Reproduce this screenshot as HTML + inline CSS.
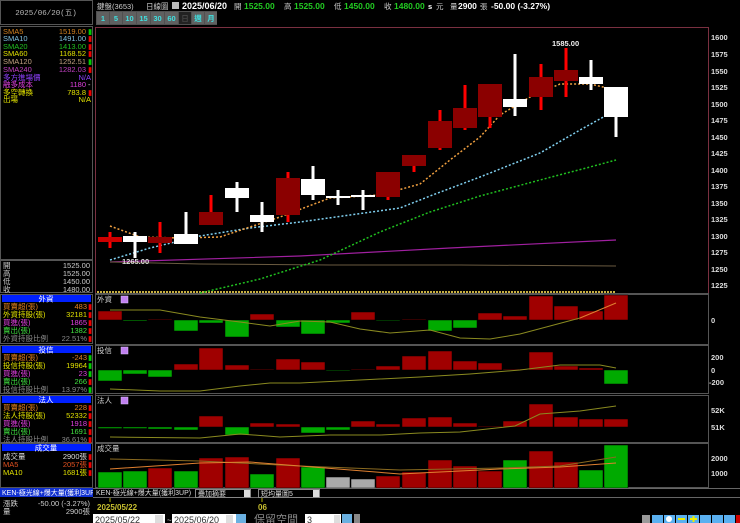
<!DOCTYPE html>
<html><head><meta charset="utf-8"><style>
html,body{margin:0;padding:0;background:#000;width:740px;height:523px;overflow:hidden}
svg{display:block}
text{font-family:"Liberation Sans","Noto Sans CJK TC",sans-serif;font-size:7.5px}
.m{font-family:"Liberation Mono","Noto Sans CJK TC",monospace}
</style></head><body>
<svg width="740" height="523" viewBox="0 0 740 523" xmlns="http://www.w3.org/2000/svg">
<rect width="740" height="523" fill="#000"/>
<!-- left panel borders -->
<rect x="0.5" y="0.5" width="92" height="24" fill="none" stroke="#555"/>
<text x="46" y="15" fill="#bbb" text-anchor="middle" class="m">2025/06/20(五)</text>
<rect x="0.5" y="26.5" width="92" height="233" fill="none" stroke="#555"/>
<g class="m">
<text x="3" y="34" fill="#d08020">SMA5</text><text x="86" y="34" fill="#d08020" text-anchor="end">1519.00</text><text x="88" y="34" fill="#0c0">▮</text>
<text x="3" y="41" fill="#80c0e0">SMA10</text><text x="86" y="41" fill="#80c0e0" text-anchor="end">1491.00</text><text x="88" y="41" fill="#e00">▮</text>
<text x="3" y="49" fill="#20c020">SMA20</text><text x="86" y="49" fill="#20c020" text-anchor="end">1413.00</text><text x="88" y="49" fill="#e00">▮</text>
<text x="3" y="56" fill="#e0e000">SMA60</text><text x="86" y="56" fill="#e0e000" text-anchor="end">1168.52</text><text x="88" y="56" fill="#e00">▮</text>
<text x="3" y="64" fill="#c0a080">SMA120</text><text x="86" y="64" fill="#c0a080" text-anchor="end">1252.51</text><text x="88" y="64" fill="#0c0">▮</text>
<text x="3" y="72" fill="#c040c0">SMA240</text><text x="86" y="72" fill="#c040c0" text-anchor="end">1282.03</text><text x="88" y="72" fill="#e00">▮</text>
<text x="3" y="80" fill="#9040ff">多方進場價</text><text x="91" y="80" fill="#9040ff" text-anchor="end">N/A</text>
<text x="3" y="87" fill="#e040e0">融多成本</text><text x="86" y="87" fill="#e040e0" text-anchor="end">1180</text><text x="88" y="87" fill="#ddd">-</text>
<text x="3" y="95" fill="#e0e000">多空轉換</text><text x="86" y="95" fill="#e0e000" text-anchor="end">783.8</text><text x="88" y="95" fill="#e00">▮</text>
<text x="3" y="102" fill="#e0e000">出場</text><text x="91" y="102" fill="#e0e000" text-anchor="end">N/A</text>
</g>
<rect x="0.5" y="260.5" width="92" height="32" fill="none" stroke="#555"/>
<g class="m" fill="#ccc">
<text x="3" y="268">開</text><text x="90" y="268" text-anchor="end">1525.00</text>
<text x="3" y="276">高</text><text x="90" y="276" text-anchor="end">1525.00</text>
<text x="3" y="284">低</text><text x="90" y="284" text-anchor="end">1450.00</text>
<text x="3" y="292">收</text><text x="90" y="292" text-anchor="end">1480.00</text>
</g>
<!-- 外資 -->
<rect x="0.5" y="294.5" width="92" height="49" fill="none" stroke="#555"/>
<rect x="2" y="295" width="89" height="7" fill="#0020ff"/><text x="46" y="301.5" fill="#fff" text-anchor="middle">外資</text>
<g class="m">
<text x="3" y="309" fill="#e08020">買賣超(張)</text><text x="87" y="309" fill="#e08020" text-anchor="end">483</text><text x="88" y="309" fill="#e00">▮</text>
<text x="3" y="317" fill="#e0e000">外資持股(張)</text><text x="87" y="317" fill="#e0e000" text-anchor="end">32181</text><text x="88" y="317" fill="#e00">▮</text>
<text x="3" y="325" fill="#e040e0">買進(張)</text><text x="87" y="325" fill="#e040e0" text-anchor="end">1865</text><text x="88" y="325" fill="#e00">▮</text>
<text x="3" y="333" fill="#40e040">賣出(張)</text><text x="87" y="333" fill="#40e040" text-anchor="end">1382</text><text x="88" y="333" fill="#e00">▮</text>
<text x="3" y="341" fill="#888">外資持股比例</text><text x="87" y="341" fill="#888" text-anchor="end">22.51%</text><text x="88" y="341" fill="#e00">▮</text>
</g>
<!-- 投信 -->
<rect x="0.5" y="345.5" width="92" height="48" fill="none" stroke="#555"/>
<rect x="2" y="346" width="89" height="7" fill="#0020ff"/><text x="46" y="352.5" fill="#fff" text-anchor="middle">投信</text>
<g class="m">
<text x="3" y="360" fill="#e08020">買賣超(張)</text><text x="87" y="360" fill="#e08020" text-anchor="end">-243</text><text x="88" y="360" fill="#0c0">▮</text>
<text x="3" y="368" fill="#e0e000">投信持股(張)</text><text x="87" y="368" fill="#e0e000" text-anchor="end">19964</text><text x="88" y="368" fill="#0c0">▮</text>
<text x="3" y="376" fill="#e040e0">買進(張)</text><text x="87" y="376" fill="#e040e0" text-anchor="end">23</text><text x="88" y="376" fill="#0c0">▮</text>
<text x="3" y="384" fill="#40e040">賣出(張)</text><text x="87" y="384" fill="#40e040" text-anchor="end">266</text><text x="88" y="384" fill="#e00">▮</text>
<text x="3" y="392" fill="#888">投信持股比例</text><text x="87" y="392" fill="#888" text-anchor="end">13.97%</text><text x="88" y="392" fill="#0c0">▮</text>
</g>
<!-- 法人 -->
<rect x="0.5" y="395.5" width="92" height="47" fill="none" stroke="#555"/>
<rect x="2" y="396" width="89" height="7" fill="#0020ff"/><text x="46" y="402.5" fill="#fff" text-anchor="middle">法人</text>
<g class="m">
<text x="3" y="410" fill="#e08020">買賣超(張)</text><text x="87" y="410" fill="#e08020" text-anchor="end">228</text><text x="88" y="410" fill="#e00">▮</text>
<text x="3" y="418" fill="#e0e000">法人持股(張)</text><text x="87" y="418" fill="#e0e000" text-anchor="end">52332</text><text x="88" y="418" fill="#e00">▮</text>
<text x="3" y="426" fill="#e040e0">買進(張)</text><text x="87" y="426" fill="#e040e0" text-anchor="end">1918</text><text x="88" y="426" fill="#e00">▮</text>
<text x="3" y="434" fill="#40e040">賣出(張)</text><text x="87" y="434" fill="#40e040" text-anchor="end">1691</text><text x="88" y="434" fill="#e00">▮</text>
<text x="3" y="442" fill="#888">法人持股比例</text><text x="87" y="442" fill="#888" text-anchor="end">36.61%</text><text x="88" y="442" fill="#e00">▮</text>
</g>
<!-- 成交量 -->
<rect x="0.5" y="443.5" width="92" height="44" fill="none" stroke="#555"/>
<rect x="2" y="444" width="89" height="7" fill="#0020ff"/><text x="46" y="450.5" fill="#fff" text-anchor="middle">成交量</text>
<g class="m">
<text x="3" y="459" fill="#ddd">成交量</text><text x="87" y="459" fill="#ddd" text-anchor="end">2900張</text><text x="88" y="459" fill="#e00">▮</text>
<text x="3" y="467" fill="#e05020">MA5</text><text x="87" y="467" fill="#e05020" text-anchor="end">2057張</text><text x="88" y="467" fill="#e00">▮</text>
<text x="3" y="475" fill="#e0e000">MA10</text><text x="87" y="475" fill="#e0e000" text-anchor="end">1681張</text><text x="88" y="475" fill="#e00">▮</text>
</g>
<rect x="0" y="488" width="93" height="9" fill="#1030d0"/>
<text x="2" y="495" fill="#fff" style="font-size:7px">KEN-極光線+爆大量(獲利3UP)</text>
<g class="m" fill="#ccc">
<text x="3" y="506">漲跌</text><text x="90" y="506" text-anchor="end">-50.00 (-3.27%)</text>
<text x="3" y="514">量</text><text x="90" y="514" text-anchor="end">2900張</text>
</g>

<!-- top bar -->
<text x="97" y="9" fill="#ccc">鍵盤(3653)</text>
<text x="146" y="9" fill="#ccc">日線圖</text>
<rect x="172" y="2" width="7" height="7" fill="#bbb"/>
<text x="182" y="9" fill="#fff" style="font-size:9px;font-weight:bold">2025/06/20</text>
<text x="234" y="9" fill="#ccc">開</text>
<text x="244" y="9" fill="#2c2" style="font-size:8.5px;font-weight:bold">1525.00</text>
<text x="284" y="9" fill="#ccc">高</text>
<text x="294" y="9" fill="#2c2" style="font-size:8.5px;font-weight:bold">1525.00</text>
<text x="334" y="9" fill="#ccc">低</text>
<text x="344" y="9" fill="#2c2" style="font-size:8.5px;font-weight:bold">1450.00</text>
<text x="384" y="9" fill="#ccc">收</text>
<text x="394" y="9" fill="#2c2" style="font-size:8.5px;font-weight:bold">1480.00</text>
<text x="428" y="9" fill="#fff" style="font-weight:bold">s</text>
<text x="436" y="9" fill="#ccc">元</text><text x="450" y="9" fill="#ccc">量</text>
<text x="458" y="9" fill="#fff" style="font-size:8.5px;font-weight:bold">2900</text>
<text x="480" y="9" fill="#ccc">張</text>
<text x="491" y="9" fill="#fff" style="font-size:8.5px;font-weight:bold">-50.00 (-3.27%)</text>
<!-- period buttons -->
<rect x="96" y="11" width="121" height="14" fill="#505050"/>
<g fill="#606060">
<rect x="97" y="12" width="12" height="12"/><rect x="110" y="12" width="12" height="12"/><rect x="123" y="12" width="13" height="12"/><rect x="137" y="12" width="13" height="12"/><rect x="151" y="12" width="13" height="12"/><rect x="165" y="12" width="13" height="12"/><rect x="192" y="12" width="12" height="12"/><rect x="205" y="12" width="12" height="12"/>
</g>
<rect x="179" y="12" width="12" height="12" fill="#222"/>
<g fill="#40e0e0" style="font-size:8px;font-weight:bold" text-anchor="middle">
<text x="103" y="21">1</text><text x="116" y="21">5</text><text x="129.5" y="21">10</text><text x="143.5" y="21">15</text><text x="157.5" y="21">30</text><text x="171.5" y="21">60</text><text x="198" y="21">週</text><text x="211" y="21">月</text>
</g>
<text x="185" y="21" fill="#555" text-anchor="middle">日</text>

<!-- main chart frame -->
<line x1="95.5" y1="27" x2="95.5" y2="488" stroke="#7a3040"/>
<line x1="95" y1="27.5" x2="708" y2="27.5" stroke="#7a3040"/>
<line x1="708.5" y1="27" x2="708.5" y2="293" stroke="#7a3040"/>
<line x1="95" y1="293.5" x2="709" y2="293.5" stroke="#555"/>
<g fill="#ddd" style="font-size:7.5px;font-weight:bold">
<text x="711" y="40">1600</text><text x="711" y="57">1575</text><text x="711" y="74">1550</text><text x="711" y="90">1525</text><text x="711" y="107">1500</text><text x="711" y="123">1475</text><text x="711" y="140">1450</text><text x="711" y="156">1425</text><text x="711" y="173">1400</text><text x="711" y="189">1375</text><text x="711" y="206">1350</text><text x="711" y="222">1325</text><text x="711" y="239">1300</text><text x="711" y="255">1275</text><text x="711" y="272">1250</text><text x="711" y="288">1225</text>
</g>
<!-- MA lines -->
<polyline points="110,262 300,256 450,248 616,240" fill="none" stroke="#a020a0" stroke-width="1.2"/>
<polyline points="110,262 200,264 330,265 460,265 616,266" fill="none" stroke="#6a5a40" stroke-width="1"/>
<line x1="97" y1="292" x2="616" y2="292" stroke="#c8b040" stroke-width="2" stroke-dasharray="2,1"/>
<polyline points="200,293 260,279 320,260 380,232 430,212 480,196 540,180 590,167 616,160" fill="none" stroke="#20c020" stroke-width="1.5" stroke-dasharray="2,2"/>
<polyline points="110,260 150,248 200,236 250,228 300,222 350,215 400,208 430,196 480,177 540,153 580,130 616,110" fill="none" stroke="#80d0f0" stroke-width="1.5" stroke-dasharray="2,2"/>
<polyline points="110,226 140,237 180,238 220,237 280,217 330,198 380,195 420,184 450,160 480,137 500,115 530,97 560,84 590,84 616,90" fill="none" stroke="#f0a040" stroke-width="1.5" stroke-dasharray="2,2"/>
<!-- candles -->
<g>
<rect x="108.5" y="232" width="3" height="16" fill="#f00"/><rect x="98" y="237" width="24" height="5" fill="#c00"/>
<rect x="133.5" y="232" width="3" height="26" fill="#fff"/><rect x="123" y="236" width="24" height="6" fill="#fff"/>
<rect x="158.5" y="222" width="3" height="31" fill="#f00"/><rect x="148" y="237" width="24" height="6" fill="#8b0000"/>
<rect x="184.5" y="212" width="3" height="32" fill="#fff"/><rect x="174" y="234" width="24" height="10" fill="#fff"/>
<rect x="209.5" y="195" width="3" height="30" fill="#f00"/><rect x="199" y="212" width="24" height="13" fill="#8b0000"/>
<rect x="235.5" y="182" width="3" height="30" fill="#fff"/><rect x="225" y="188" width="24" height="10" fill="#fff"/>
<rect x="260.5" y="202" width="3" height="30" fill="#fff"/><rect x="250" y="215" width="24" height="7" fill="#fff"/>
<rect x="286.5" y="172" width="3" height="50" fill="#f00"/><rect x="276" y="178" width="24" height="37" fill="#8b0000"/>
<rect x="311.5" y="166" width="3" height="34" fill="#fff"/><rect x="301" y="179" width="24" height="16" fill="#fff"/>
<rect x="336.5" y="190" width="3" height="15" fill="#fff"/><rect x="326" y="196" width="24" height="2" fill="#fff"/>
<rect x="361.5" y="190" width="3" height="20" fill="#fff"/><rect x="351" y="195" width="24" height="2" fill="#fff"/>
<rect x="386.5" y="172" width="3" height="28" fill="#f00"/><rect x="376" y="172" width="24" height="25" fill="#8b0000"/>
<rect x="412.5" y="155" width="3" height="17" fill="#f00"/><rect x="402" y="155" width="24" height="11" fill="#8b0000"/>
<rect x="438.5" y="110" width="3" height="40" fill="#f00"/><rect x="428" y="121" width="24" height="27" fill="#8b0000"/>
<rect x="463.5" y="85" width="3" height="45" fill="#f00"/><rect x="453" y="108" width="24" height="20" fill="#8b0000"/>
<rect x="488.5" y="84" width="3" height="44" fill="#f00"/><rect x="478" y="84" width="24" height="33" fill="#8b0000"/>
<rect x="513.5" y="54" width="3" height="62" fill="#fff"/><rect x="503" y="99" width="24" height="8" fill="#fff"/>
<rect x="539.5" y="64" width="3" height="46" fill="#f00"/><rect x="529" y="77" width="24" height="20" fill="#8b0000"/>
<rect x="564.5" y="48" width="3" height="49" fill="#f00"/><rect x="554" y="70" width="24" height="11" fill="#8b0000"/>
<rect x="589.5" y="60" width="3" height="30" fill="#fff"/><rect x="579" y="77" width="24" height="7" fill="#fff"/>
<rect x="614.5" y="117" width="3" height="20" fill="#fff"/><rect x="604" y="87" width="24" height="30" fill="#fff"/>
</g>
<text x="552" y="46" fill="#eee" style="font-size:7.5px;font-weight:bold">1585.00</text>
<text x="122" y="264" fill="#ddd" style="font-size:7.5px;font-weight:bold">1265.00</text>

<!-- subpanel frames -->
<g fill="none" stroke="#555">
<rect x="95.5" y="294.5" width="613" height="50"/>
<rect x="95.5" y="345.5" width="613" height="48"/>
<rect x="95.5" y="395.5" width="613" height="47"/>
<rect x="95.5" y="443.5" width="613" height="44"/>
</g>
<g fill="#ddd" style="font-size:7.5px;font-weight:bold">
<text x="711" y="323">0</text>
<text x="711" y="360">200</text><text x="711" y="373">0</text><text x="709" y="385">-200</text>
<text x="711" y="413">52K</text><text x="711" y="430">51K</text>
<text x="711" y="461">2000</text><text x="711" y="476">1000</text>
<text x="711" y="497">200</text>
</g>
<g fill="#ccc" style="font-size:7px">
<text x="97" y="302">外資</text><text x="97" y="353">投信</text><text x="97" y="403">法人</text><text x="97" y="451">成交量</text>
</g>
<g fill="#c080f0" stroke="#e0c0ff" stroke-width="0.5">
<rect x="121" y="296" width="7" height="7"/><rect x="121" y="347" width="7" height="7"/><rect x="121" y="397" width="7" height="7"/>
</g>
<!-- 外資 bars -->
<g stroke="#000" stroke-width="0.5">
<rect x="98" y="311" width="24" height="9" fill="#a00000"/>
<rect x="123" y="320" width="24" height="1" fill="#0a0"/>
<rect x="148" y="319" width="24" height="1" fill="#600"/>
<rect x="174" y="320" width="24" height="11" fill="#0a0"/>
<rect x="199" y="320" width="24" height="3" fill="#0a0"/>
<rect x="225" y="320" width="24" height="17" fill="#0a0"/>
<rect x="250" y="314" width="24" height="6" fill="#a00000"/>
<rect x="276" y="320" width="24" height="7" fill="#0a0"/>
<rect x="301" y="320" width="24" height="14" fill="#0a0"/>
<rect x="326" y="320" width="24" height="3" fill="#0a0"/>
<rect x="351" y="312" width="24" height="8" fill="#a00000"/>
<rect x="376" y="320" width="24" height="1" fill="#060"/>
<rect x="402" y="319" width="24" height="1" fill="#600"/>
<rect x="428" y="320" width="24" height="11" fill="#0a0"/>
<rect x="453" y="320" width="24" height="8" fill="#0a0"/>
<rect x="478" y="313" width="24" height="7" fill="#a00000"/>
<rect x="503" y="316" width="24" height="4" fill="#a00000"/>
<rect x="529" y="296" width="24" height="24" fill="#a00000"/>
<rect x="554" y="306" width="24" height="14" fill="#a00000"/>
<rect x="579" y="311" width="24" height="9" fill="#a00000"/>
<rect x="604" y="295" width="24" height="25" fill="#a00000"/>
</g>
<polyline points="110,310 160,310 200,317 240,322 270,326 300,321 330,322 360,329 390,333 430,330 460,338 490,339 520,334 550,326 580,318" fill="none" stroke="#8a8a20"/>
<polyline points="580,318 616,303" fill="none" stroke="#e08030"/>
<!-- 投信 bars -->
<g stroke="#000" stroke-width="0.5">
<rect x="98" y="370" width="24" height="11" fill="#0a0"/>
<rect x="123" y="370" width="24" height="4" fill="#0a0"/>
<rect x="148" y="370" width="24" height="7" fill="#0a0"/>
<rect x="174" y="364" width="24" height="6" fill="#a00000"/>
<rect x="199" y="348" width="24" height="22" fill="#a00000"/>
<rect x="225" y="365" width="24" height="5" fill="#a00000"/>
<rect x="250" y="369" width="24" height="1" fill="#600"/>
<rect x="276" y="359" width="24" height="11" fill="#a00000"/>
<rect x="301" y="362" width="24" height="8" fill="#a00000"/>
<rect x="326" y="370" width="24" height="1" fill="#060"/>
<rect x="351" y="369" width="24" height="1" fill="#600"/>
<rect x="376" y="366" width="24" height="4" fill="#a00000"/>
<rect x="402" y="356" width="24" height="14" fill="#a00000"/>
<rect x="428" y="351" width="24" height="19" fill="#a00000"/>
<rect x="453" y="361" width="24" height="9" fill="#a00000"/>
<rect x="478" y="363" width="24" height="7" fill="#a00000"/>
<rect x="503" y="369" width="24" height="1" fill="#600"/>
<rect x="529" y="352" width="24" height="18" fill="#a00000"/>
<rect x="554" y="366" width="24" height="4" fill="#a00000"/>
<rect x="579" y="368" width="24" height="2" fill="#a00000"/>
<rect x="604" y="370" width="24" height="14" fill="#0a0"/>
</g>
<polyline points="110,389 160,391 200,391 240,386 270,383 300,383 360,380 420,377 470,374 520,370 560,365 600,365 616,368" fill="none" stroke="#8a8a20"/>
<!-- 法人 bars -->
<g stroke="#000" stroke-width="0.5">
<rect x="98" y="427" width="24" height="1.5" fill="#0a0"/>
<rect x="123" y="427" width="24" height="1.5" fill="#0a0"/>
<rect x="148" y="427" width="24" height="2" fill="#0a0"/>
<rect x="174" y="427" width="24" height="3" fill="#0a0"/>
<rect x="199" y="416" width="24" height="11" fill="#a00000"/>
<rect x="225" y="427" width="24" height="8" fill="#0a0"/>
<rect x="250" y="423" width="24" height="4" fill="#a00000"/>
<rect x="276" y="424" width="24" height="3" fill="#a00000"/>
<rect x="301" y="427" width="24" height="6" fill="#0a0"/>
<rect x="326" y="427" width="24" height="3" fill="#0a0"/>
<rect x="351" y="421" width="24" height="6" fill="#a00000"/>
<rect x="376" y="424" width="24" height="3" fill="#a00000"/>
<rect x="402" y="418" width="24" height="9" fill="#a00000"/>
<rect x="428" y="417" width="24" height="10" fill="#a00000"/>
<rect x="453" y="423" width="24" height="4" fill="#a00000"/>
<rect x="478" y="426" width="24" height="1" fill="#600"/>
<rect x="503" y="421" width="24" height="6" fill="#a00000"/>
<rect x="529" y="404" width="24" height="23" fill="#a00000"/>
<rect x="554" y="417" width="24" height="10" fill="#a00000"/>
<rect x="579" y="419" width="24" height="8" fill="#a00000"/>
<rect x="604" y="419" width="24" height="8" fill="#a00000"/>
</g>
<polyline points="110,437 200,438 240,434 280,437 330,435 380,435 420,433 460,432 515,426 540,414 580,411 616,406" fill="none" stroke="#8a8a20"/>
<!-- volume bars -->
<g stroke="#000" stroke-width="0.5">
<rect x="98" y="472" width="24" height="16" fill="#0a0"/>
<rect x="123" y="471" width="24" height="17" fill="#0a0"/>
<rect x="148" y="468" width="24" height="20" fill="#a00000"/>
<rect x="174" y="471" width="24" height="17" fill="#0a0"/>
<rect x="199" y="458" width="24" height="30" fill="#a00000"/>
<rect x="225" y="457" width="24" height="31" fill="#a00000"/>
<rect x="250" y="474" width="24" height="14" fill="#0a0"/>
<rect x="276" y="458" width="24" height="30" fill="#a00000"/>
<rect x="301" y="467" width="24" height="21" fill="#0a0"/>
<rect x="326" y="477" width="24" height="11" fill="#aaa"/>
<rect x="351" y="479" width="24" height="9" fill="#aaa"/>
<rect x="376" y="476" width="24" height="12" fill="#a00000"/>
<rect x="402" y="472" width="24" height="16" fill="#a00000"/>
<rect x="428" y="460" width="24" height="28" fill="#a00000"/>
<rect x="453" y="466" width="24" height="22" fill="#a00000"/>
<rect x="478" y="471" width="24" height="17" fill="#a00000"/>
<rect x="503" y="460" width="24" height="28" fill="#0a0"/>
<rect x="529" y="451" width="24" height="37" fill="#a00000"/>
<rect x="554" y="462" width="24" height="26" fill="#a00000"/>
<rect x="579" y="470" width="24" height="18" fill="#0a0"/>
<rect x="604" y="445" width="24" height="43" fill="#0a0"/>
</g>
<polyline points="110,459 200,461 300,466 400,470 500,468 560,466 616,457" fill="none" stroke="#8a6a20"/>
<polyline points="110,469 200,463 250,462 300,466 400,474 460,471 500,469 560,467 616,463" fill="none" stroke="#e08030"/>
<!-- bottom bar -->
<rect x="93" y="488" width="647" height="10" fill="#000"/>
<line x1="93" y1="488.5" x2="740" y2="488.5" stroke="#666"/>
<line x1="93" y1="497.5" x2="740" y2="497.5" stroke="#666"/>
<text x="96" y="495" fill="#ddd" style="font-size:7px">KEN-極光線+爆大量(獲利3UP)</text>
<rect x="195.5" y="489.5" width="55" height="8" fill="#000" stroke="#888"/>
<text x="198" y="496" fill="#ddd" style="font-size:7px">疊加摘要</text>
<rect x="244" y="490" width="6" height="7" fill="#ddd"/>
<rect x="258.5" y="489.5" width="61" height="8" fill="#000" stroke="#888"/>
<text x="261" y="496" fill="#ddd" style="font-size:7px">短均量圖5</text>
<rect x="313" y="490" width="6" height="7" fill="#ddd"/>
<line x1="110" y1="498" x2="110" y2="502" stroke="#aa0"/>
<line x1="262" y1="498" x2="262" y2="502" stroke="#aa0"/>
<text x="97" y="510" fill="#c8c030" style="font-size:8px;font-weight:bold">2025/05/22</text>
<text x="258" y="510" fill="#c8c030" style="font-size:8px;font-weight:bold">06</text>
<!-- date inputs -->
<rect x="93" y="514" width="72" height="9" fill="#fff"/>
<text x="95" y="523" fill="#333" style="font-size:9px">2025/05/22</text>
<rect x="155" y="515" width="8" height="8" fill="#ddd"/>
<text x="167" y="523" fill="#ccc" style="font-size:8px">~</text>
<rect x="172" y="514" width="64" height="9" fill="#fff"/>
<text x="174" y="523" fill="#333" style="font-size:9px">2025/06/20</text>
<rect x="226" y="515" width="7" height="8" fill="#ddd"/>
<rect x="236" y="514" width="10" height="9" fill="#6ab0e0"/>
<text x="254" y="523" fill="#888" style="font-size:11px">保留空間</text>
<rect x="305" y="514" width="36" height="9" fill="#fff"/>
<text x="307" y="523" fill="#333" style="font-size:9px">3</text>
<rect x="334" y="515" width="6" height="8" fill="#ddd"/>
<rect x="342" y="514" width="10" height="9" fill="#6ab0e0"/>
<rect x="354" y="514" width="6" height="9" fill="#888"/>
<!-- toolbar icons -->
<rect x="642" y="515" width="8" height="8" fill="#999"/>
<g fill="#5ab0f0">
<rect x="652" y="515" width="11" height="8"/><rect x="664" y="515" width="11" height="8"/><rect x="676" y="515" width="11" height="8"/><rect x="688" y="515" width="11" height="8"/><rect x="700" y="515" width="11" height="8"/><rect x="712" y="515" width="11" height="8"/><rect x="724" y="515" width="11" height="8"/>
</g>
<rect x="736" y="515" width="4" height="8" fill="#c00"/>
<rect x="678" y="518" width="7" height="2" fill="#ee0"/><rect x="690" y="518" width="7" height="2" fill="#ee0"/><rect x="692.5" y="516" width="2" height="6" fill="#ee0"/>
<circle cx="669" cy="519" r="3" fill="#fff"/>
</svg>
</body></html>
